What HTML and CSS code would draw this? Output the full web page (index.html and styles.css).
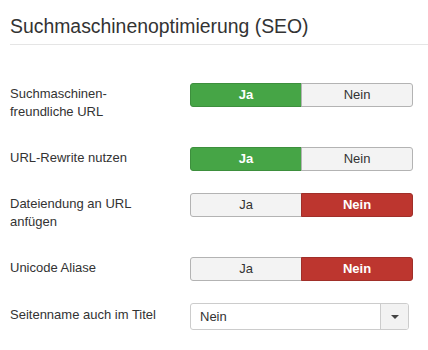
FILE: index.html
```html
<!DOCTYPE html>
<html lang="de">
<head>
<meta charset="utf-8">
<title>SEO</title>
<link rel="stylesheet" href="styles.css">
</head>
<body>
<div class="page">
  <h2 class="title">Suchmaschinenoptimierung (SEO)</h2>
  <hr class="rule">
  <div class="form">
    <div class="row">
      <div class="label">Suchmaschinen-<br>freundliche URL</div>
      <div class="toggle">
        <span class="btn yes active">Ja</span>
        <span class="btn no">Nein</span>
      </div>
    </div>
    <div class="row">
      <div class="label">URL-Rewrite nutzen</div>
      <div class="toggle">
        <span class="btn yes active">Ja</span>
        <span class="btn no">Nein</span>
      </div>
    </div>
    <div class="row">
      <div class="label">Dateiendung an URL<br>anfügen</div>
      <div class="toggle">
        <span class="btn yes">Ja</span>
        <span class="btn no active">Nein</span>
      </div>
    </div>
    <div class="row">
      <div class="label">Unicode Aliase</div>
      <div class="toggle">
        <span class="btn yes">Ja</span>
        <span class="btn no active">Nein</span>
      </div>
    </div>
    <div class="row">
      <div class="label label-select">Seitenname auch im Titel</div>
      <div class="select">
        <span class="select-value">Nein</span>
        <span class="select-arrow"><span class="caret"></span></span>
      </div>
    </div>
  </div>
</div>
</body>
</html>
```
FILE: styles.css
```css
html, body {
  margin: 0;
  padding: 0;
  background: #ffffff;
}
body {
  font-family: "Liberation Sans", Arial, Helvetica, sans-serif;
  font-size: 13px;
  color: #333333;
}
.page {
  padding-left: 10px;
}
.title {
  margin: 14px 0 0 0;
  font-size: 19.4px;
  line-height: 24px;
  font-weight: normal;
  color: #333333;
}
.rule {
  margin: 6px 0 0 0;
  border: 0;
  border-top: 1px solid #e5e5e5;
  height: 0;
}
.form {
  padding-top: 38px;
  display: flex;
  flex-direction: column;
  gap: 22px;
}
.row {
  display: flex;
  align-items: flex-start;
}
.label {
  width: 180px;
  flex: none;
  padding-top: 2px;
  padding-bottom: 4px;
  line-height: 18px;
}
.label-select {
  padding-top: 3px;
}
.toggle {
  display: flex;
  width: 223px;
  height: 24px;
}
.btn {
  flex: 1;
  box-sizing: border-box;
  height: 24px;
  line-height: 22px;
  text-align: center;
  background: #f3f3f3;
  border: 1px solid #b3b3b3;
  color: #333333;
}
.btn.yes {
  border-radius: 3px 0 0 3px;
}
.btn.no {
  border-radius: 0 3px 3px 0;
  margin-left: -1px;
}
.btn.yes.active {
  background: #46a546;
  border-color: #3d8f3d;
  color: #ffffff;
  font-weight: bold;
}
.btn.no.active {
  background: #bd362f;
  border-color: #a02f29;
  color: #ffffff;
  font-weight: bold;
}
.select {
  display: flex;
  box-sizing: border-box;
  width: 219px;
  height: 27px;
  border: 1px solid #cccccc;
  border-radius: 3px;
  background: #ffffff;
  overflow: hidden;
}
.select-value {
  flex: 1;
  padding-left: 9px;
  line-height: 25px;
  color: #333333;
}
.select-arrow {
  width: 27px;
  flex: none;
  border-left: 1px solid #cccccc;
  background: #f2f2f2;
  display: flex;
  align-items: center;
  justify-content: center;
}
.caret {
  width: 0;
  height: 0;
  border-left: 4px solid transparent;
  border-right: 4px solid transparent;
  border-top: 4px solid #444444;
}
```
